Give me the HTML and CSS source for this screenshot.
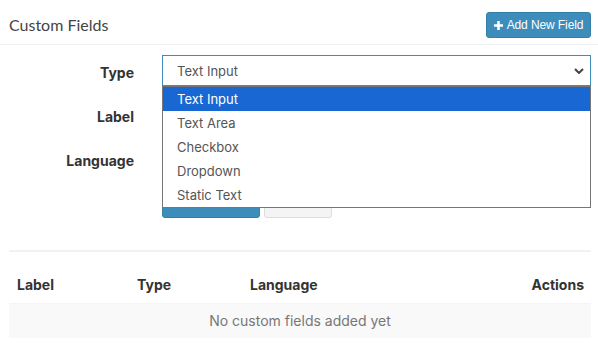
FILE: index.html
```html
<!DOCTYPE html>
<html>
<head>
<meta charset="utf-8">
<link rel="stylesheet" href="styles.css">
</head>
<body>
<div class="box">
  <div class="box-header">
    <h3 class="box-title">Custom Fields</h3>
    <button class="btn btn-primary btn-add">
      <svg class="plus" viewBox="0 0 10 10" width="9" height="9"><path d="M3.6 0h2.8v3.6H10v2.8H6.4V10H3.6V6.4H0V3.6h3.6z" fill="#fff"/></svg>
      <span>Add New Field</span>
    </button>
  </div>
  <div class="box-body">
    <form class="form">
      <div class="form-row">
        <label class="form-label">Type</label>
        <div class="control dropdown-wrap">
          <div class="select focused">
            <span>Text Input</span>
            <svg class="chev" viewBox="0 0 10 6" width="10" height="6"><path d="M1 1l4 4 4-4" fill="none" stroke="#444" stroke-width="2"/></svg>
          </div>
          <ul class="listbox">
            <li class="opt active">Text Input</li>
            <li class="opt">Text Area</li>
            <li class="opt">Checkbox</li>
            <li class="opt">Dropdown</li>
            <li class="opt">Static Text</li>
          </ul>
        </div>
      </div>
      <div class="form-row">
        <label class="form-label">Label</label>
        <div class="control"><div class="input"></div></div>
      </div>
      <div class="form-row">
        <label class="form-label">Language</label>
        <div class="control"><div class="input"></div></div>
      </div>
      <div class="form-row">
        <span class="form-label"></span>
        <div class="control actions">
          <span class="btn-save"></span>
          <span class="btn-cancel"></span>
        </div>
      </div>
    </form>
    <hr class="sep">
    <table class="table">
      <colgroup><col class="c1"><col class="c2"><col><col class="c4"></colgroup>
      <thead>
        <tr><th>Label</th><th>Type</th><th>Language</th><th class="right">Actions</th></tr>
      </thead>
      <tbody>
        <tr class="empty"><td colspan="4">No custom fields added yet</td></tr>
      </tbody>
    </table>
  </div>
</div>
</body>
</html>
```
FILE: styles.css
```css
* { box-sizing: border-box; }
html, body { margin: 0; padding: 0; background: #fff; }
body { font-family: Inter, "Noto Sans", sans-serif; color: #333; }

.box-header {
  display: flex;
  align-items: center;
  justify-content: space-between;
  padding: 12px 7px 6px 9px;
  height: 45px;
  border-bottom: 1px solid #f0f0f0;
}
.box-title {
  margin: 0;
  font-family: Lato, "Open Sans", sans-serif;
  font-weight: 400;
  font-size: 16px;
  color: #444;
  position: relative;
  top: -1px;
}
.btn-add {
  display: flex;
  align-items: center;
  justify-content: center;
  gap: 4px;
  height: 26px;
  width: 105px;
  padding: 0;
  background: #3c8dbc;
  border: 1px solid #367fa9;
  border-radius: 3px;
  color: #fff;
  font-family: "Liberation Sans", Arial, sans-serif;
  font-size: 12px;
  font-weight: 400;
  letter-spacing: -0.1px;
}
.plus { display: block; }

.box-body { padding: 10px 7px 0 9px; }

.form { display: flex; flex-direction: column; gap: 13px; }
.form-row { display: grid; grid-template-columns: 125px 429px; column-gap: 28px; align-items: center; height: 31px; }
.form-label { text-align: right; font-weight: 700; font-size: 14px; color: #333; position: relative; top: 2px; }
.control { position: relative; height: 31px; }
.select {
  height: 31px;
  border: 1px solid #3c8dbc;
  display: flex;
  align-items: center;
  justify-content: space-between;
  padding: 0 6px 0 14px;
  font-size: 13px;
  color: #555;
}
.chev { display: block; }
.input { height: 31px; border: 1px solid #d2d6de; }

.listbox {
  position: absolute;
  top: 31px;
  left: 0;
  right: 0;
  margin: 0;
  padding: 0;
  list-style: none;
  background: #fff;
  border: 1px solid #767676;
  z-index: 5;
}
.opt {
  height: 24px;
  line-height: 24px;
  padding-left: 14px;
  font-size: 13px;
  color: #555;
}
.opt.active { background: #1967d2; color: #fff; }

.actions { display: flex; gap: 4px; }
.btn-save { width: 98px; height: 31px; background: #3c8dbc; border-radius: 3px; border: 1px solid #367fa9; }
.btn-cancel { width: 68px; height: 31px; background: #f4f4f4; border: 1px solid #ddd; border-radius: 3px; }

.sep { margin: 32px 0 0 0; border: 0; border-top: 2px solid #f2f2f2; }

.table { width: 582px; border-collapse: collapse; table-layout: fixed; margin-top: 15px; }
.c1 { width: 120px; }
.c2 { width: 113px; }
.c4 { width: 120px; }
.table th { text-align: left; font-weight: 700; font-size: 14px; color: #333; padding: 8px 8px; line-height: 20px; }
.table th.right { text-align: right; padding-right: 7px; }
.empty td {
  background: #f9f9f9;
  border-top: 1px solid #f4f4f4;
  text-align: center;
  color: #777;
  font-size: 14px;
  padding: 7px 8px;
  line-height: 20px;
}
```
